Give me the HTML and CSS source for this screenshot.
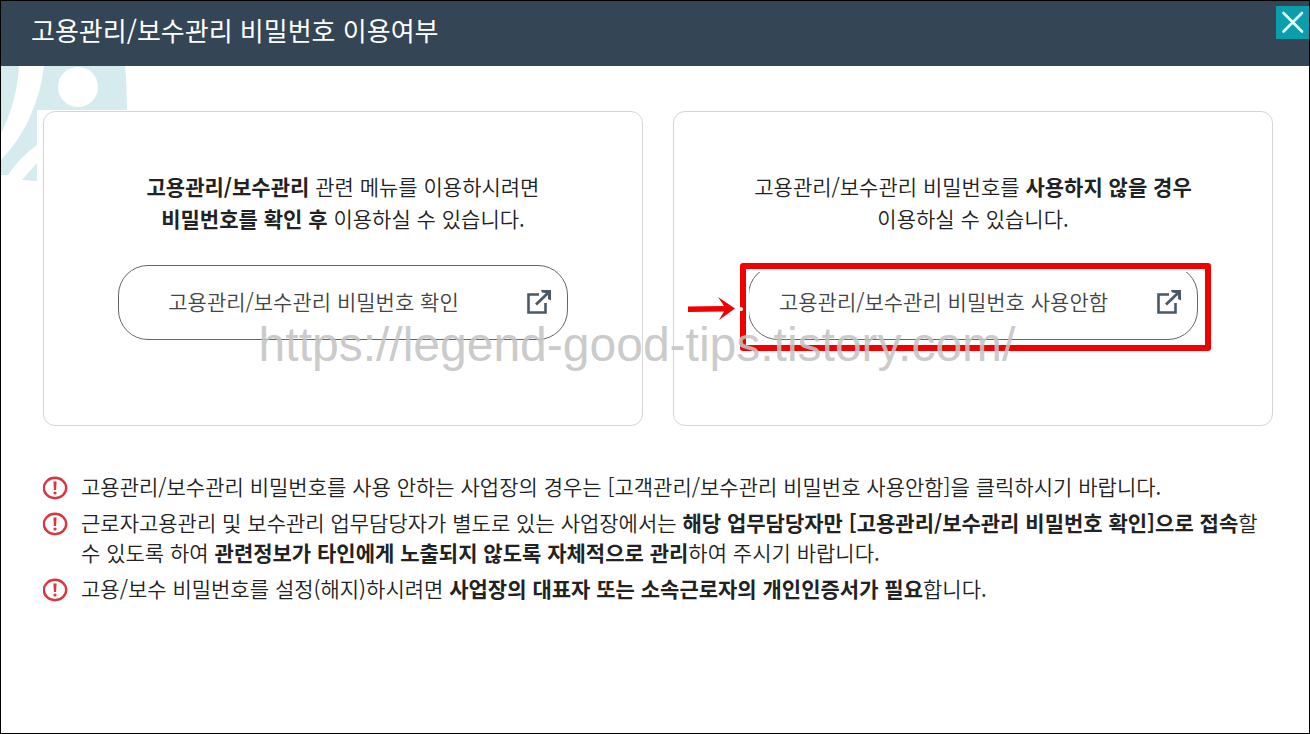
FILE: index.html
```html
<!DOCTYPE html>
<html lang="ko">
<head>
<meta charset="utf-8">
<title>고용관리/보수관리 비밀번호 이용여부</title>
<link rel="stylesheet" href="styles.css">
</head>
<body>
<div class="popup">
  <header class="popup-header">
    <h1 class="popup-title">고용관리/보수관리 비밀번호 이용여부</h1>
    <button class="close" type="button" aria-label="닫기">
      <svg width="33" height="33" viewBox="0 0 33 33" aria-hidden="true"><path d="M7.500 7 26 25.500M26 7 7.500 25.500" fill="none" stroke="#e4ffff" stroke-width="2.600" stroke-linecap="round"/></svg>
    </button>
  </header>
  <main class="popup-body">
    <svg class="deco" width="127" height="118" viewBox="1 66 127 118" aria-hidden="true">
      <path fill="#d6ebee" d="M1 66H19Q17 102 1 133Z"/>
      <path fill="#d6ebee" d="M44 66H125Q127 86 127 118H37V145Q20 157 8 175H1V160Q37 122 44 66Z"/>
      <path fill="#d6ebee" d="M22 180 37 163V181Z"/>
      <circle cx="78" cy="87" r="20" fill="#fff"/>
    </svg>
    <div class="content">
      <div class="cards">
        <section class="card">
          <p class="card-text"><strong>고용관리/보수관리</strong> 관련 메뉴를 이용하시려면<br><strong>비밀번호를 확인 후</strong> 이용하실 수 있습니다.</p>
          <div class="action">
            <button class="pill" type="button">
              <span class="pill-label">고용관리/보수관리 비밀번호 확인</span>
              <svg class="pill-icon" width="26" height="26" viewBox="0 0 26 26" aria-hidden="true"><path d="M13 4.500H2.500V22.500H19.500V13" fill="none" stroke="#4b5866" stroke-width="2.600"/><path d="M10 14.500 22 3" fill="none" stroke="#4b5866" stroke-width="2.800"/><path d="M15 0H25V10.500L22 9V3.500L16 2.500Z" fill="#4b5866"/></svg>
            </button>
          </div>
        </section>
        <section class="card">
          <p class="card-text">고용관리/보수관리 비밀번호를 <strong>사용하지 않을 경우</strong><br>이용하실 수 있습니다.</p>
          <div class="action">
            <button class="pill" type="button">
              <span class="pill-label">고용관리/보수관리 비밀번호 사용안함</span>
              <svg class="pill-icon" width="26" height="26" viewBox="0 0 26 26" aria-hidden="true"><path d="M13 4.500H2.500V22.500H19.500V13" fill="none" stroke="#4b5866" stroke-width="2.600"/><path d="M10 14.500 22 3" fill="none" stroke="#4b5866" stroke-width="2.800"/><path d="M15 0H25V10.500L22 9V3.500L16 2.500Z" fill="#4b5866"/></svg>
            </button>
            <div class="highlight"></div>
            <svg class="arrow" width="56" height="24" viewBox="0 0 56 24" aria-hidden="true"><path fill="#f20000" d="M1 9.500 37 9 31 0 48 11.500 32 23 37 14.500 1 15Z"/><circle cx="54" cy="12" r="2" fill="#fff"/></svg>
          </div>
        </section>
      </div>
      <ul class="notes">
        <li class="note">
          <svg class="note-icon" width="26" height="24" viewBox="0 0 26 24" aria-hidden="true"><ellipse cx="12" cy="12" rx="11.200" ry="10.200" fill="#fff" stroke="#d93640" stroke-width="2.400"/><path d="M10.400 5.500H13.600L13.100 14H10.900Z" fill="#d93640"/><circle cx="12" cy="17" r="1.600" fill="#d93640"/></svg>
          <p class="note-text">고용관리/보수관리 비밀번호를 사용 안하는 사업장의 경우는 [고객관리/보수관리 비밀번호 사용안함]을 클릭하시기 바랍니다.</p>
        </li>
        <li class="note">
          <svg class="note-icon" width="26" height="24" viewBox="0 0 26 24" aria-hidden="true"><ellipse cx="12" cy="12" rx="11.200" ry="10.200" fill="#fff" stroke="#d93640" stroke-width="2.400"/><path d="M10.400 5.500H13.600L13.100 14H10.900Z" fill="#d93640"/><circle cx="12" cy="17" r="1.600" fill="#d93640"/></svg>
          <p class="note-text">근로자고용관리 및 보수관리 업무담당자가 별도로 있는 사업장에서는 <strong>해당 업무담당자만 [고용관리/보수관리 비밀번호 확인]으로 접속</strong>할<br>수 있도록 하여 <strong>관련정보가 타인에게 노출되지 않도록 자체적으로 관리</strong>하여 주시기 바랍니다.</p>
        </li>
        <li class="note">
          <svg class="note-icon" width="26" height="24" viewBox="0 0 26 24" aria-hidden="true"><ellipse cx="12" cy="12" rx="11.200" ry="10.200" fill="#fff" stroke="#d93640" stroke-width="2.400"/><path d="M10.400 5.500H13.600L13.100 14H10.900Z" fill="#d93640"/><circle cx="12" cy="17" r="1.600" fill="#d93640"/></svg>
          <p class="note-text">고용/보수 비밀번호를 설정(해지)하시려면 <strong>사업장의 대표자 또는 소속근로자의 개인인증서가 필요</strong>합니다.</p>
        </li>
      </ul>
    </div>
    <div class="watermark">https://legend-good-tips.tistory.com/</div>
  </main>
</div>
</body>
</html>
```
FILE: styles.css
```css
* { box-sizing: border-box; }

body {
  margin: 0;
  background: #fff;
  color: #222;
  font-family: "Noto Sans CJK KR", "Noto Sans", sans-serif;
  font-size: 21px;
  font-weight: 350;
}

.popup {
  display: flex;
  flex-direction: column;
  min-height: 100vh;
  border: 1px solid #000;
}

.popup-header {
  display: flex;
  align-items: flex-start;
  justify-content: space-between;
  height: 65px;
  padding-left: 30px;
  background: #344556;
}

.popup-title {
  margin: 0;
  color: #fff;
  font-size: 26px;
  font-weight: 400;
  line-height: 58px;
}

.close {
  display: flex;
  margin: 5px 0 0;
  padding: 0;
  border: 0;
  background: #0a9dab;
  cursor: pointer;
}

.popup-body {
  position: relative;
  flex: 1;
  padding: 44px 30px 0 36px;
}

.deco {
  position: absolute;
  top: 0;
  left: 0;
}

.content {
  position: relative;
  padding: 1px 6px 24px;
  background: #fff;
}

.cards {
  display: grid;
  grid-template-columns: 1fr 1fr;
  gap: 30px;
}

.card {
  padding: 58px 74px 85px;
  border: 1px solid #d5d5d5;
  border-radius: 12px;
}

.card-text {
  margin: 0 -50px 31px;
  line-height: 32px;
  text-align: center;
}

strong { font-weight: 700; }

.action { position: relative; }

.pill {
  display: flex;
  align-items: center;
  gap: 18px;
  width: 100%;
  height: 75px;
  padding: 0 15px 3px 0;
  border: 1px solid #666;
  border-radius: 30px;
  background: #fff;
  color: #444;
  font: inherit;
  cursor: pointer;
}

.pill-label {
  flex: 1;
  text-align: center;
}

.pill-icon { margin-top: 4px; }

.highlight {
  position: absolute;
  inset: -2px -13px -11px -8px;
  border: 6px solid #f20000;
  border-radius: 3px;
  box-shadow: inset 3px 3px #fff;
  pointer-events: none;
}

.arrow {
  position: absolute;
  top: 32px;
  left: -61px;
}

.notes {
  display: flex;
  flex-direction: column;
  gap: 6px;
  margin: 45px 0 0;
  padding: 0;
  list-style: none;
}

.note {
  display: flex;
  align-items: flex-start;
  gap: 12px;
}

.note-icon {
  flex: none;
  margin-top: 5px;
}

.note-text {
  margin: 0;
  line-height: 30px;
  white-space: nowrap;
}

.watermark {
  position: absolute;
  top: 252px;
  left: 0;
  right: 0;
  padding-right: 36px;
  color: rgba(196, 196, 196, 0.9);
  font-family: "Liberation Sans", Arial, sans-serif;
  font-size: 48px;
  font-weight: 400;
  line-height: 54px;
  text-align: center;
  pointer-events: none;
}
```
